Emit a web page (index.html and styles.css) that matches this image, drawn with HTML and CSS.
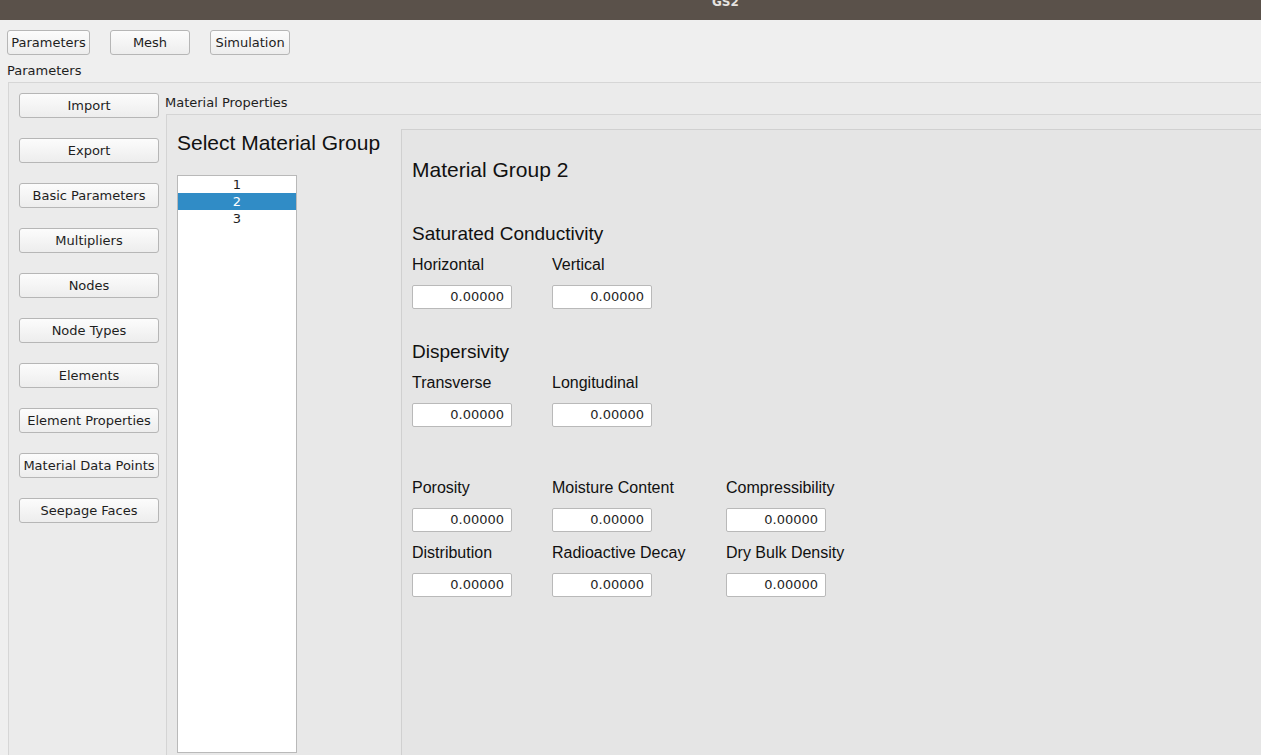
FILE: index.html
```html
<!DOCTYPE html>
<html>
<head>
<meta charset="utf-8">
<link rel="stylesheet" href="styles.css">
</head>
<body>
<div class="titlebar"><div class="title">GS2</div></div>
<div class="topbar">
  <button class="btn tb-params">Parameters</button>
  <button class="btn tb-mesh">Mesh</button>
  <button class="btn tb-sim">Simulation</button>
</div>
<div class="page-label">Parameters</div>
<div class="outer">
  <div class="side">
    <button class="btn side-btn">Import</button>
    <button class="btn side-btn">Export</button>
    <button class="btn side-btn">Basic Parameters</button>
    <button class="btn side-btn">Multipliers</button>
    <button class="btn side-btn">Nodes</button>
    <button class="btn side-btn">Node Types</button>
    <button class="btn side-btn">Elements</button>
    <button class="btn side-btn">Element Properties</button>
    <button class="btn side-btn">Material Data Points</button>
    <button class="btn side-btn">Seepage Faces</button>
  </div>
  <div class="main">
    <div class="group-label">Material Properties</div>
    <div class="inner">
      <div class="select-col">
        <div class="h-group">Select Material Group</div>
        <div class="list">
          <div class="row">1</div>
          <div class="row sel">2</div>
          <div class="row">3</div>
        </div>
      </div>
      <div class="panel">
        <div class="h-group">Material Group 2</div>
        <div class="h-section first">Saturated Conductivity</div>
        <div class="fields">
          <div class="field"><div class="flabel">Horizontal</div><div class="input">0.00000</div></div>
          <div class="field"><div class="flabel">Vertical</div><div class="input">0.00000</div></div>
        </div>
        <div class="h-section second">Dispersivity</div>
        <div class="fields">
          <div class="field"><div class="flabel">Transverse</div><div class="input">0.00000</div></div>
          <div class="field"><div class="flabel">Longitudinal</div><div class="input">0.00000</div></div>
        </div>
        <div class="fields misc">
          <div class="field"><div class="flabel">Porosity</div><div class="input">0.00000</div></div>
          <div class="field"><div class="flabel">Moisture Content</div><div class="input">0.00000</div></div>
          <div class="field"><div class="flabel">Compressibility</div><div class="input">0.00000</div></div>
          <div class="field"><div class="flabel">Distribution</div><div class="input">0.00000</div></div>
          <div class="field"><div class="flabel">Radioactive Decay</div><div class="input">0.00000</div></div>
          <div class="field"><div class="flabel">Dry Bulk Density</div><div class="input">0.00000</div></div>
        </div>
      </div>
    </div>
  </div>
</div>
</body>
</html>
```
FILE: styles.css
```css
html, body {
  margin: 0;
  padding: 0;
  height: 755px;
  overflow: hidden;
}
body {
  background: #efefef;
  font-family: "DejaVu Sans", sans-serif;
  font-size: 13px;
  color: #1e1e1e;
}
.titlebar {
  height: 20px;
  background: #5a514a;
  overflow: hidden;
  padding-left: 712px;
}
.title {
  margin-top: -5px;
  font-weight: bold;
  font-size: 12px;
  line-height: 14px;
  color: #e6e3e0;
}
.btn {
  box-sizing: border-box;
  height: 25px;
  border: 1px solid #b6b6b6;
  border-radius: 3px;
  background: linear-gradient(#fcfcfc, #ededed);
  font-family: "DejaVu Sans", sans-serif;
  font-size: 13px;
  color: #1e1e1e;
  padding: 0;
  margin: 0;
  text-align: center;
}
.topbar {
  display: flex;
  gap: 20px;
  padding: 10px 0 0 7px;
}
.tb-params { width: 83px; }
.tb-mesh { width: 80px; }
.tb-sim { width: 80px; }
.page-label {
  margin: 8px 0 0 7px;
  line-height: 16px;
}
.outer {
  margin: 3px 0 0 8px;
  border-top: 1px solid #d6d6d6;
  border-left: 1px solid #d6d6d6;
  background: #ebebeb;
  padding: 10px 0 0 10px;
  height: 662px;
  display: flex;
}
.side {
  width: 140px;
  flex: none;
  display: flex;
  flex-direction: column;
  gap: 20px;
  margin-right: 6px;
}
.side-btn { width: 140px; }
.main {
  flex: 1;
  display: flex;
  flex-direction: column;
  min-height: 0;
}
.group-label {
  line-height: 16px;
  margin-top: 2px;
}
.inner {
  margin-top: 3px;
  margin-left: 1px;
  border-top: 1px solid #d4d4d4;
  border-left: 1px solid #d4d4d4;
  background: #e8e8e8;
  padding-left: 10px;
  flex: 1;
  display: flex;
  min-height: 0;
}
.select-col {
  width: 224px;
  flex: none;
  padding-top: 16px;
}
.h-group {
  font-family: "Liberation Sans", Arial, sans-serif;
  font-size: 21px;
  line-height: 24px;
  color: #111;
}
.list {
  margin-top: 20px;
  width: 120px;
  height: 578px;
  box-sizing: border-box;
  border: 1px solid #b9b9b9;
  background: #fff;
}
.row {
  height: 17px;
  line-height: 17px;
  text-align: center;
  color: #1e1e1e;
}
.row.sel {
  background: #308cc6;
  color: #fff;
}
.panel {
  flex: 1;
  margin-top: 14px;
  border-top: 1px solid #d0d0d0;
  border-left: 1px solid #d0d0d0;
  background: #e5e5e5;
  padding: 28px 0 0 10px;
}
.h-section {
  font-family: "Liberation Sans", Arial, sans-serif;
  font-size: 19px;
  line-height: 22px;
  padding-top: 1px;
  color: #111;
}
.h-section.first { margin-top: 40px; }
.h-section.second { margin-top: 31px; }
.fields {
  margin-top: 9px;
  display: grid;
  grid-template-columns: 140px 174px 140px;
  row-gap: 10px;
}
.fields.misc { margin-top: 50px; }
.flabel {
  font-family: "Liberation Sans", Arial, sans-serif;
  font-size: 16px;
  line-height: 20px;
  padding-top: 1px;
  color: #111;
  white-space: nowrap;
}
.input {
  margin-top: 10px;
  box-sizing: border-box;
  width: 100px;
  height: 24px;
  border: 1px solid #b9b9b9;
  border-radius: 2px;
  background: #fff;
  text-align: right;
  padding-right: 7px;
  line-height: 22px;
  color: #1e1e1e;
}
```
